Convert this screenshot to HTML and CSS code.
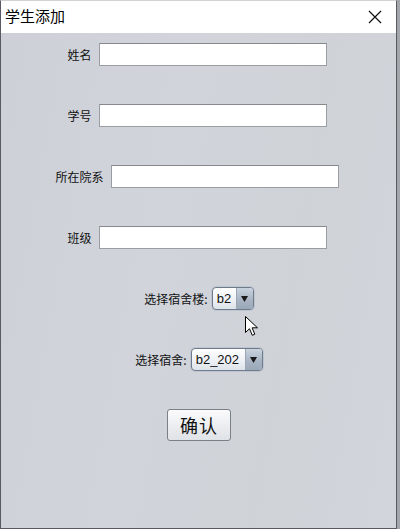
FILE: index.html
```html
<!DOCTYPE html>
<html lang="zh">
<head>
<meta charset="utf-8">
<title>学生添加</title>
<link rel="stylesheet" href="styles.css">
</head>
<body>
<div class="shadow">
  <div class="window">
    <div class="titlebar">
      <span class="title">学生添加</span>
      <span class="close">
        <svg width="14" height="14" viewBox="0 0 14 14"><path d="M1 1L13 13M13 1L1 13" stroke="#111" stroke-width="1.2" fill="none"/></svg>
      </span>
    </div>
    <div class="content">
      <div class="row"><span class="label">姓名</span><span class="field"></span></div>
      <div class="row"><span class="label">学号</span><span class="field"></span></div>
      <div class="row"><span class="label">所在院系</span><span class="field"></span></div>
      <div class="row"><span class="label">班级</span><span class="field"></span></div>
      <div class="row combo-row"><span class="label">选择宿舍楼:</span>
        <span class="combo combo-small"><span class="combo-text">b2</span><span class="combo-arrow"><svg width="7" height="6" viewBox="0 0 7 6"><path d="M0 0H7L3.5 6Z" fill="#1a1a1a"/></svg></span></span>
      </div>
      <div class="row combo-row"><span class="label">选择宿舍:</span>
        <span class="combo combo-wide"><span class="combo-text">b2_202</span><span class="combo-arrow"><svg width="7" height="6" viewBox="0 0 7 6"><path d="M0 0H7L3.5 6Z" fill="#1a1a1a"/></svg></span></span>
      </div>
      <div class="row btn-row"><span class="button">确认</span></div>
    </div>
  </div>
  <svg class="cursor" width="14" height="21" viewBox="0 0 14 21"><path d="M0.5 0.5V16.5L4.5 12.7L7.3 19.3L9.8 18.2L7.1 11.8H12.5Z" fill="#fff" stroke="#000" stroke-width="1" stroke-linejoin="round"/></svg>
</div>
</body>
</html>
```
FILE: styles.css
```css
html, body {
  margin: 0;
  padding: 0;
  background: #a3a7ac;
}
body {
  font-family: "Noto Sans CJK SC", "Noto Sans", sans-serif;
  width: 400px;
  height: 529px;
  overflow: hidden;
}
.shadow {
  position: relative;
  width: 400px;
  height: 529px;
  background: #a3a7ac;
}
.window {
  width: 395px;
  height: 527px;
  border: 1px solid #575b61;
  border-top-color: #d0d2d6;
  background: #cfd2d8;
  display: flex;
  flex-direction: column;
}
.titlebar {
  height: 32px;
  background: #ffffff;
  display: flex;
  align-items: center;
  justify-content: space-between;
  flex-shrink: 0;
}
.title {
  font-size: 15px;
  color: #000;
  margin-left: 4px;
  line-height: 18px;
  margin-top: -2px;
}
.close {
  display: flex;
  width: 14px;
  height: 14px;
  margin-right: 14px;
  margin-top: -1px;
}
.content {
  flex: 1;
  display: flex;
  flex-direction: column;
  gap: 38px;
  padding-top: 10px;
  padding-right: 3px;
  background: linear-gradient(100deg, #cdd0d6 0%, #d1d4da 40%, #cfd2d7 70%, #d2d5db 100%);
}
.row {
  height: 23px;
  display: flex;
  align-items: center;
  justify-content: center;
  gap: 7px;
}
.label {
  font-size: 12px;
  color: #111;
  line-height: 14px;
}
.field {
  width: 226px;
  height: 21px;
  background: #fff;
  border: 1px solid #9a9da2;
  border-top-color: #85888d;
}
.combo-row {
  gap: 4px;
  padding-left: 4px;
}
.combo {
  height: 21px;
  display: flex;
  border: 1px solid #6e7b8b;
  border-radius: 4px;
  overflow: hidden;
  background: linear-gradient(#ffffff, #eef1f5 55%, #dde3ea);
  box-shadow: 0 0 0 1px rgba(140, 160, 190, 0.25);
}
.combo-small { width: 40px; }
.combo-wide { width: 70px; }
.combo-text {
  flex: 1;
  font-family: "Liberation Sans", Arial, sans-serif;
  font-size: 13px;
  color: #111;
  line-height: 21px;
  padding-left: 4px;
}
.combo-arrow {
  width: 16px;
  display: flex;
  align-items: center;
  justify-content: center;
  border-left: 1px solid #9aa6b5;
  background: linear-gradient(#c9d3de, #a7b3c2 60%, #9aa8b8);
}
.btn-row {
  height: 32px;
  padding-left: 4px;
}
.button {
  width: 62px;
  height: 30px;
  border: 1px solid #7b7f86;
  border-radius: 3px;
  background: linear-gradient(#fbfbfc, #eceef1 50%, #dfe2e6);
  display: flex;
  align-items: center;
  justify-content: center;
  font-size: 18px;
  color: #111;
  letter-spacing: 1px;
}
.cursor {
  position: absolute;
  left: 245px;
  top: 316px;
}
```
